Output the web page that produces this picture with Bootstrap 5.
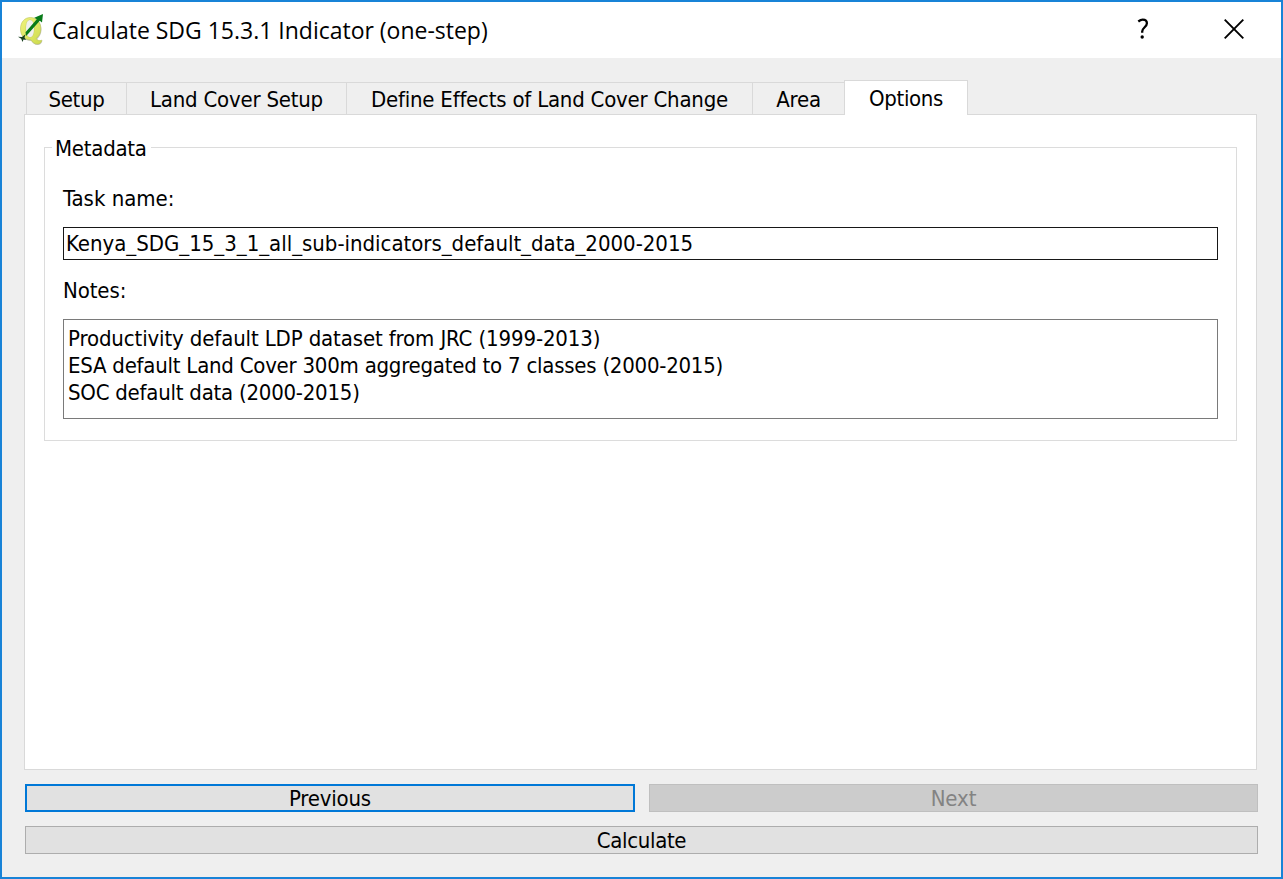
<!DOCTYPE html>
<html lang="en">
<head>
<meta charset="utf-8">
<meta name="viewport" content="width=device-width, initial-scale=1">
<title>Calculate SDG 15.3.1 Indicator (one-step)</title>
<link href="https://cdn.jsdelivr.net/npm/bootstrap@5.3.0/dist/css/bootstrap.min.css" rel="stylesheet">
<style>
  body{font-family:"DejaVu Sans Condensed","DejaVu Sans",sans-serif;font-size:22px;line-height:27px;letter-spacing:-.1px;color:#000}
  .dialog{height:879px;background:#efefef;border:2px solid #1883d7}
  .title-bar{height:56px;padding-left:15px;padding-bottom:2px}
  .title-text{font-family:"Open Sans",sans-serif;font-size:23px;letter-spacing:-.01px;margin-left:6px;padding-top:2px}
  .title-tool{border:0;background:none;padding:0;display:flex;color:#000}
  .content{padding:22px 23px 23px 22px}
  .nav-tabs{--bs-nav-tabs-border-width:0;height:34px;padding-left:2px;letter-spacing:-.22px}
  .nav-tabs .nav-link{height:32px;padding:1px 0 0;margin:0;border:solid #d9d9d9;border-width:1px 0 0 1px;border-radius:0;color:#000;background:#efefef;text-align:center;line-height:32px;letter-spacing:inherit}
  .nav-tabs .nav-link.active{height:35px;border-width:1px 1px 0;border-color:#d9d9d9;color:#000;background:#fff;padding-top:0;line-height:35px;position:relative;margin-bottom:-1px}
  .nav-tabs .t1,.nav-tabs .t5{letter-spacing:-.35px}
  .t1{width:100px}.t2{width:220px}.t3{width:406px}.t4{width:92px}.t5{width:124px}
  .pane{border:1px solid #d9d9d9;background:#fff;padding:19px;height:656px;margin-right:1px}
  .group{border:1px solid #dcdcdc;height:307px;margin:0;padding:0 18px}
  .group legend{float:none;width:auto;font-size:22px;line-height:27px;margin:0 0 0 -11px;padding:1px 4px 0 3px;height:27px;letter-spacing:-.25px}
  .group label{display:block;line-height:27px}
  .group .form-control{border-radius:0;color:#000;font-size:22px;letter-spacing:-.02px;background:#fff}
  .group .task-label{margin-top:24px;letter-spacing:0}
  .group .task{height:33px;border:1px solid #171717;padding:0 2px;line-height:31px;margin-top:15px;margin-bottom:17px}
  .group .notes{height:100px;border:1px solid #7a7a7a;padding:5px 4px;line-height:27px;margin-top:15px;letter-spacing:-.13px}
  .notes .tight{letter-spacing:-.24px}
  .buttons{padding-left:1px;gap:14px;margin-top:14px}
  .buttons .btn{height:28px;border-radius:0;padding:1px 0 0;font-size:22px;line-height:26px;letter-spacing:-.1px;color:#000;background:#e1e1e1;border:1px solid #adadad}
  .buttons .btn-focus{width:610px;border:2px solid #0078d7;line-height:24px;letter-spacing:-.2px}
  .buttons .btn-run{letter-spacing:-.35px}
  .buttons .btn:disabled{opacity:1;background:#ccc;border-color:#bfbfbf;color:#838383}
</style>
</head>
<body>
<main class="dialog d-flex flex-column">
  <header class="title-bar bg-white d-flex align-items-center">
    <svg width="29" height="34" viewBox="0 0 29 34" aria-hidden="true">
      <defs><linearGradient id="q" x1="0" y1="0" x2="1" y2="1"><stop offset="0" stop-color="#eff27c"/><stop offset="1" stop-color="#cddc4c"/></linearGradient></defs>
      <path fill="#9da08a" opacity=".6" d="M14 6c6 0 10.500 4.700 10.500 11.500 0 4-1.800 7.500-4.500 9.700 1.200 1.700 3 2.300 5.500 1.300-.7 3-2.600 4.500-5 4.500-2.700 0-4.700-1.800-6.200-4C8 29 4 24.500 4 18 4 11 8 6 14 6z"/>
      <path fill="url(#q)" stroke="#bcc45c" stroke-width=".6" fill-rule="evenodd" d="M13.500 5.500c6 0 10.300 4.500 10.300 11.300 0 4.200-1.700 7.700-4.700 9.700 1.300 2 3.200 2.600 5.700 1.700-.6 2.700-2.300 3.900-4.600 3.900-2.800 0-4.800-1.800-6.400-4.300C7.500 28 3.500 23.500 3.500 17c0-6.800 4-11.500 10-11.500zM13 8c-3 0-4 4-4 8.500 0 4.700 1.300 8.700 4 8.700 2.900 0 4-4 4-8.900C17 11.500 15.600 8 13 8z"/>
      <path fill="#fff" opacity=".75" d="M13 8c-3 0-4 4-4 8.500 0 4.700 1.300 8.700 4 8.700 2.900 0 4-4 4-8.900C17 11.500 15.600 8 13 8z"/>
      <path fill="#087b19" d="M8.500 20.300 19.800 7.300l-2.500-1.600L26 2l-1 8.600-2.200-1.800L11 22 9 24z"/>
      <path fill="#17401e" d="M1 24.800l4 .2 3.500-2.700-1 3.200 1.500 2.500-2.500-.5-1 2.500-1.300-3.200z"/>
    </svg>
    <div class="title-text flex-grow-1">Calculate SDG 15.3.1 Indicator (one-step)</div>
    <button class="title-tool" type="button" aria-label="Help" style="margin-right:75px"><svg width="12" height="22" viewBox="0 0 12 22"><path d="M1.300 3.500C3 2.200 4.300 1.700 5.700 1.700c2.600 0 4.200 1.300 4.200 3.600 0 3.700-4.700 4.200-4.700 8.300v1.200" fill="none" stroke="#000" stroke-width="2.300"/><circle cx="5.200" cy="19" r="1.700"/></svg></button>
    <button class="title-tool" type="button" aria-label="Close" style="margin-right:37px"><svg width="20" height="20" viewBox="0 0 20 20"><path d="M.7.700l18.600 18.600M19.300.7L.7 19.300" stroke="#000" stroke-width="1.900"/></svg></button>
  </header>

  <div class="content">
    <div class="nav nav-tabs align-items-end" role="tablist">
      <button class="nav-link t1" type="button">Setup</button>
      <button class="nav-link t2" type="button">Land Cover Setup</button>
      <button class="nav-link t3" type="button">Define Effects of Land Cover Change</button>
      <button class="nav-link t4" type="button">Area</button>
      <button class="nav-link t5 active" type="button">Options</button>
    </div>
    <section class="pane">
      <fieldset class="group">
        <legend>Metadata</legend>
        <label for="task" class="task-label">Task name:</label>
        <input id="task" class="form-control task" value="Kenya_SDG_15_3_1_all_sub-indicators_default_data_2000-2015">
        <label id="notes-label">Notes:</label>
        <div class="form-control notes" role="textbox" aria-multiline="true" aria-labelledby="notes-label" contenteditable="true" spellcheck="false">
          <div>Productivity default LDP dataset from JRC (1999-2013)</div>
          <div class="tight">ESA default Land Cover 300m aggregated to 7 classes (2000-2015)</div>
          <div class="tight">SOC default data (2000-2015)</div>
        </div>
      </fieldset>
    </section>
    <div class="buttons d-flex flex-column">
      <div class="d-flex" style="gap:14px">
        <button class="btn btn-focus" type="button">Previous</button>
        <button class="btn flex-grow-1" type="button" disabled>Next</button>
      </div>
      <button class="btn btn-run w-100" type="button">Calculate</button>
    </div>
  </div>
</main>
<script src="https://cdn.jsdelivr.net/npm/bootstrap@5.3.0/dist/js/bootstrap.bundle.min.js"></script>
</body>
</html>
